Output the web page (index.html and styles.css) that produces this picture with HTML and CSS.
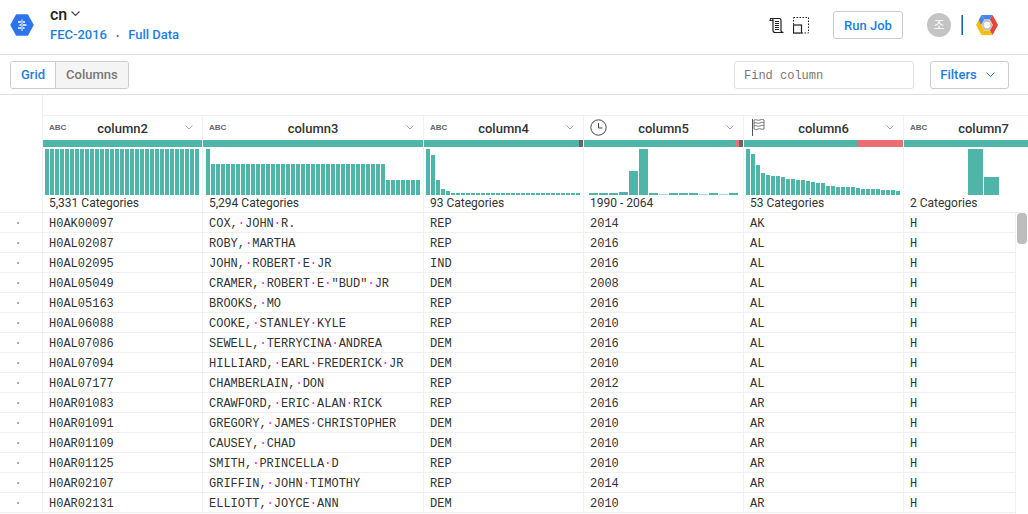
FILE: index.html
```html
<!DOCTYPE html>
<html>
  <head>
    <title>cn - FEC-2016</title>
    <meta name="viewport" content="width=device-width, initial-scale=1.0">
    <link rel="stylesheet" href="styles.css">
  </head>
  <body>
    <div class="topbar">
      <svg class="logo" width="24" height="22" viewBox="0 0 24 22">
        <path d="M6.500 1H17.500L23 11L17.500 21H6.500L1 11Z" fill="#2b74ee" stroke="#2b74ee" stroke-width="1.500" stroke-linejoin="round"/>
        <path d="M12 5.500V17" stroke="#d5e4fc" stroke-width="1.200"/>
        <path d="M8 8H11M13 8H15M9.500 11H11M13 11H16.500M8 14H11M13 14H14.500" stroke="#fff" stroke-width="1.400"/>
      </svg>
      <div class="titlebox">
        <div class="flowname">cn
          <svg class="flowcaret" width="9" height="5" viewBox="0 0 9 5"><path d="M.5 .5L4.500 4.500L8.500 .5" fill="none" stroke="#444" stroke-width="1.100"/></svg>
        </div>
        <div class="crumbs"><span>FEC-2016</span><span class="crumbdot">&#8226;</span><span>Full Data</span></div>
      </div>
      <div class="topright">
        <svg class="scrollicon" width="16" height="17" viewBox="0 0 16 17">
          <path d="M1 1.500H10.500C12 1.500 12 3 12 4V13.500C12 15 13 15.500 14.500 15.500H6C4.500 15.500 4 14.500 4 13.500V3C4 2 3.500 1.500 2.500 1.500C1.500 1.500 1 2.200 1 3.500H4" fill="none" stroke="#222" stroke-width="1.200"/>
          <path d="M6 4.500H10M6 6.500H10M6 8.500H10M6 10.500H10M6 12.500H10" stroke="#222" stroke-width="1"/>
        </svg>
        <svg class="sampleicon" width="16" height="17" viewBox="0 0 16 17">
          <rect x="0.500" y="0.500" width="15" height="15.500" fill="none" stroke="#222" stroke-dasharray="1.500 1.500"/>
          <rect x="0.500" y="8" width="8" height="8" fill="#fff" stroke="#222" stroke-width="1.200"/>
        </svg>
        <button class="btn runjob">Run Job</button>
        <div class="avatar">조</div>
        <div class="sep"></div>
        <svg class="gcp" width="24" height="22" viewBox="0 0 24 22">
          <path d="M6.500 1H17.500L14.800 5.500H9.200Z" fill="#4285f4"/>
          <path d="M17.500 1L23 11L17.500 21L14.800 16.500L17.800 11L14.800 5.500Z" fill="#ea4335"/>
          <path d="M6.500 21L9.200 16.500H14.800L17.500 21Z" fill="#fbbc05"/>
          <path d="M6.500 1L1 11L6.500 21L9.200 16.500L6.200 11L9.200 5.500Z" fill="#fbbc05"/>
          <path d="M6.500 1L9.200 5.500L6.200 11L3.800 6Z" fill="#4285f4"/>
          <path d="M9.200 5.500H14.800L17.800 11L14.800 16.500H9.200L6.200 11Z" fill="#c4c4c4"/>
          <circle cx="12" cy="11" r="3.200" fill="#fff"/>
        </svg>
      </div>
    </div>
    <div class="toolbar">
      <div class="seg">
        <div class="segitem segactive">Grid</div>
        <div class="segitem">Columns</div>
      </div>
      <div class="toolright">
        <input class="findcol" type="text" placeholder="Find column">
        <button class="btn filters">Filters
          <svg width="9" height="5" viewBox="0 0 9 5"><path d="M.5 .5L4.500 4.500L8.500 .5" fill="none" stroke="#1a7fe0" stroke-width="1"/></svg>
        </button>
      </div>
    </div>
    <div class="grid">
      <div class="headgap"></div>
      <div class="headrow" id="headrow"></div>
      <div class="gridbody">
        <div class="rows" id="rows"></div>
        <div class="scrolltrack"><div class="scrollthumb"></div></div>
      </div>
    </div>
    <script src="script.js"></script>
  </body>
</html>
```
FILE: styles.css
```css
*{box-sizing:border-box;margin:0;padding:0;}
html,body{height:100%;overflow:hidden;}
body{font-family:Roboto,"Liberation Sans",sans-serif;font-size:12px;color:#333;background:#fff;}
.topbar{height:55px;border-bottom:1px solid #ddd;display:flex;align-items:center;padding:0 29px 4px 10px;}
.logo{flex:none;}
.titlebox{margin-left:16px;margin-top:-1px;}
.flowname{font-size:16px;font-weight:500;color:#222;line-height:17px;display:flex;align-items:center;gap:4px;}
.flowcaret{margin-top:-2px;}
.crumbs{font-size:13px;font-weight:500;color:#1a7fe0;line-height:16px;margin-top:4px;}
.crumbdot{color:#666;font-size:9px;margin:0 9px;}
.topright{margin-left:auto;display:flex;align-items:center;}
.scrollicon{margin-right:8px;}
.sampleicon{margin-right:24px;}
.btn{background:#fff;border:1px solid #ccc;border-radius:3px;color:#1a7fe0;font-family:Roboto,sans-serif;font-weight:500;font-size:13px;}
.runjob{width:70px;height:28px;}
.avatar{width:24px;height:24px;border-radius:50%;background:#c4c4c4;color:#fff;font-family:"Noto Sans CJK KR",sans-serif;font-size:12px;line-height:24px;text-align:center;margin-left:24px;}
.sep{width:2px;height:20px;background:linear-gradient(to right,#c9983e 50%,#1f5fb0 50%);margin-left:10px;}
.gcp{margin-left:12px;}
.toolbar{height:40px;border-bottom:1px solid #ddd;display:flex;align-items:center;padding:0 19px 0 10px;}
.seg{display:flex;height:28px;border:1px solid #ccc;border-radius:3px;font-size:13px;font-weight:500;overflow:hidden;}
.segitem{padding:0 10px;line-height:26px;color:#777;background:#f4f4f4;}
.segactive{color:#1a7fe0;background:#fff;border-right:1px solid #ccc;}
.toolright{margin-left:auto;display:flex;align-items:center;}
.findcol{width:180px;height:28px;border:1px solid #e2e2e2;border-radius:3px;padding:2px 9px 0;font-family:"Liberation Mono",monospace;font-size:12px;outline:none;}
.findcol::placeholder{color:#777;}
.filters{width:79px;height:28px;margin-left:16px;padding-right:4px;display:flex;align-items:center;justify-content:center;gap:9px;}
.headgap{height:20px;margin-left:42px;border-left:1px solid #eee;}
.headrow{display:flex;height:98px;padding-left:42px;border-bottom:1px solid #f0f0f0;}
.colw{flex:none;width:160px;border-left:1px solid #f0f0f0;}
.colw.wide{width:221px;}
.hcol{height:98px;overflow:hidden;}
.hname{height:25px;border-top:1px solid #f0f0f0;display:flex;align-items:center;position:relative;}
.htitle{position:absolute;left:0;right:0;text-align:center;font-size:13px;font-weight:500;color:#333;}
.abc{font-size:8px;font-weight:700;color:#666;font-family:"Liberation Sans",sans-serif;margin-left:6px;margin-top:-1px;}
.hicon{margin-left:6px;margin-top:-2px;}
.hcaret{margin-left:auto;margin-right:9px;margin-top:-1px;position:relative;}
.quality{height:7px;display:flex;}
.qgood{background:#4db6a8;flex:1;}
.qbad{background:#e96f75;}
.qmiss{background:#666;}
.hist{height:47px;margin-top:1px;display:flex;align-items:flex-end;gap:1px;padding-left:2px;}
.hist.pad3{padding-left:3px;}
.hbar{flex:none;width:4px;background:#4db6a8;}
.hbar.light{background:#a5dcd3;}
.hist.ten .hbar{width:9px;}
.hist.ten{padding-left:5px;}
.hist.two .hbar{width:15px;}
.hist.two{padding-left:64px;}
.hstat{height:17px;line-height:17px;padding-left:6px;font-size:12px;color:#333;white-space:nowrap;}
.gridbody{display:flex;height:320px;}
.rows{flex:none;width:1015px;overflow:hidden;}
.row{display:flex;height:20px;border-bottom:1px solid #f0f0f0;font-family:"Liberation Mono",monospace;font-size:12px;line-height:22px;color:#333;}
.rownum{flex:none;width:42px;text-align:center;padding-right:6px;color:#888;}
.cell{padding-left:6px;white-space:pre;overflow:hidden;height:20px;}
.sp{color:#f0f;}
.scrolltrack{flex:1;border-left:1px solid #f0f0f0;padding:0 1px;}
.scrollthumb{width:10px;height:31px;border-radius:4px;background:#bdbdbd;}
```
FILE: script.js
```js
var flat = function(n, h){ return new Array(n).fill(h); };

var columns = [
  {name:"column2", type:"abc", stat:"5,331 Categories", bars:flat(31,46)},
  {name:"column3", type:"abc", stat:"5,294 Categories", wide:true, hist:"pad3", bars:[46].concat(flat(35,31), flat(7,15))},
  {name:"column4", type:"abc", stat:"93 Categories", miss:4, bars:[46,40,15,6,4].concat(flat(26,2))},
  {name:"column5", type:"clock", stat:"1990 - 2064", bad:4, miss:4, hist:"ten",
    bars:[2,2,2,3,24,46,2,-1,2,2,2,-1,2,-1,2]},
  {name:"column6", type:"flag", stat:"53 Categories", bad:45,
    bars:[46,41,30,22,20,19,19,18,16,16,15,15,14,13,12,12,9,9,8,8,8,8,7,6,6,6,6,5,5,5,4]},
  {name:"column7", type:"abc", stat:"2 Categories", last:true, hist:"two", bars:[46,18]}
];

var rows = [
  ["H0AK00097","COX, JOHN R.","REP","2014","AK","H"],
  ["H0AL02087","ROBY, MARTHA","REP","2016","AL","H"],
  ["H0AL02095","JOHN, ROBERT E JR","IND","2016","AL","H"],
  ["H0AL05049","CRAMER, ROBERT E \"BUD\" JR","DEM","2008","AL","H"],
  ["H0AL05163","BROOKS, MO","REP","2016","AL","H"],
  ["H0AL06088","COOKE, STANLEY KYLE","REP","2010","AL","H"],
  ["H0AL07086","SEWELL, TERRYCINA ANDREA","DEM","2016","AL","H"],
  ["H0AL07094","HILLIARD, EARL FREDERICK JR","DEM","2010","AL","H"],
  ["H0AL07177","CHAMBERLAIN, DON","REP","2012","AL","H"],
  ["H0AR01083","CRAWFORD, ERIC ALAN RICK","REP","2016","AR","H"],
  ["H0AR01091","GREGORY, JAMES CHRISTOPHER","DEM","2010","AR","H"],
  ["H0AR01109","CAUSEY, CHAD","DEM","2010","AR","H"],
  ["H0AR01125","SMITH, PRINCELLA D","REP","2010","AR","H"],
  ["H0AR02107","GRIFFIN, JOHN TIMOTHY","REP","2014","AR","H"],
  ["H0AR02131","ELLIOTT, JOYCE ANN","DEM","2010","AR","H"]
];

var clockicon = '<svg class="hicon" width="17" height="17" viewBox="0 0 17 17"><circle cx="8.500" cy="8.500" r="7.700" fill="none" stroke="#444"/><path d="M8.500 4V9H12.500" fill="none" stroke="#444"/></svg>';
var flagicon = '<svg class="hicon" width="15" height="17" viewBox="0 0 15 17"><path d="M2.500 0V17" stroke="#555"/>'
  + '<path d="M4 1C6 0 8 2 10 1S12.500 0 14 1V10C12 11 10 9 8 10S6 11 4 10ZM4 4C6 3 8 5 10 4S12.500 3 14 4M4 7C6 6 8 8 10 7S12.500 6 14 7" fill="none" stroke="#555" stroke-width=".8"/></svg>';
var hcaret = '<svg class="hcaret" width="8" height="5" viewBox="0 0 8 5"><path d="M.5 .5L4 4L7.500 .5" fill="none" stroke="#aaa"/></svg>';

function colclass(c){
  return "colw" + (c.wide ? " wide" : "");
}

var headhtml = "";
columns.forEach(function(c){
  var icon = c.type == "clock" ? clockicon : c.type == "flag" ? flagicon : '<span class="abc">ABC</span>';
  var bars = "";
  c.bars.forEach(function(h){
    //negative height = the lighter, almost empty bucket
    bars += h < 0
      ? '<div class="hbar light" style="height:' + (-h) + 'px"></div>'
      : '<div class="hbar" style="height:' + h + 'px"></div>';
  });
  headhtml += '<div class="hcol ' + colclass(c) + '">'
    + '<div class="hname">' + icon + '<div class="htitle">' + c.name + '</div>' + (c.last ? "" : hcaret) + '</div>'
    + '<div class="quality"><div class="qgood"></div>'
    + (c.bad ? '<div class="qbad" style="width:' + c.bad + 'px"></div>' : "")
    + (c.miss ? '<div class="qmiss" style="width:' + c.miss + 'px"></div>' : "")
    + '</div>'
    + '<div class="hist ' + (c.hist || "") + '">' + bars + '</div>'
    + '<div class="hstat">' + c.stat + '</div></div>';
});
document.getElementById("headrow").innerHTML = headhtml;

var rowhtml = "";
rows.forEach(function(r){
  rowhtml += '<div class="row"><div class="rownum">&#183;</div>';
  r.forEach(function(val, i){
    var text = val.split(" ").join('<span class="sp">&#183;</span>');
    rowhtml += '<div class="cell ' + colclass(columns[i]) + '">' + text + '</div>';
  });
  rowhtml += '</div>';
});
document.getElementById("rows").innerHTML = rowhtml;
```
